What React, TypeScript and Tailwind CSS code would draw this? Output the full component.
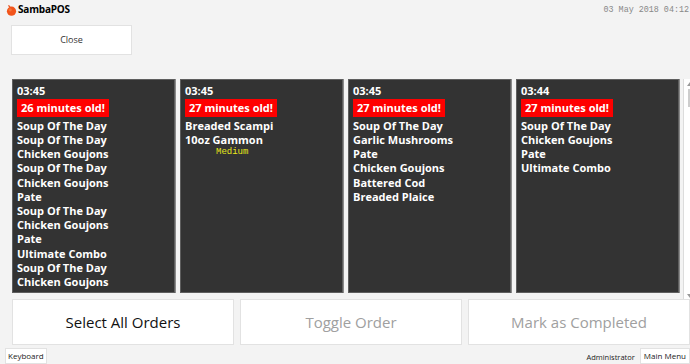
import React from "react";

type Ticket = {
  time: string;
  age: string;
  items: { name: string; note?: string }[];
};

const tickets: Ticket[] = [
  {
    time: "03:45",
    age: "26 minutes old!",
    items: [
      { name: "Soup Of The Day" },
      { name: "Soup Of The Day" },
      { name: "Chicken Goujons" },
      { name: "Soup Of The Day" },
      { name: "Chicken Goujons" },
      { name: "Pate" },
      { name: "Soup Of The Day" },
      { name: "Chicken Goujons" },
      { name: "Pate" },
      { name: "Ultimate Combo" },
      { name: "Soup Of The Day" },
      { name: "Chicken Goujons" },
    ],
  },
  {
    time: "03:45",
    age: "27 minutes old!",
    items: [{ name: "Breaded Scampi" }, { name: "10oz Gammon", note: "Medium" }],
  },
  {
    time: "03:45",
    age: "27 minutes old!",
    items: [
      { name: "Soup Of The Day" },
      { name: "Garlic Mushrooms" },
      { name: "Pate" },
      { name: "Chicken Goujons" },
      { name: "Battered Cod" },
      { name: "Breaded Plaice" },
    ],
  },
  {
    time: "03:44",
    age: "27 minutes old!",
    items: [
      { name: "Soup Of The Day" },
      { name: "Chicken Goujons" },
      { name: "Pate" },
      { name: "Ultimate Combo" },
    ],
  },
];

const Logo = () => (
  <svg width="12" height="12" viewBox="0 0 12 12">
    <path d="M3 1.5 C4 1 5 1.6 5.4 3 C4.2 3 3.3 2.5 3 1.5 Z" fill="#e8501c" />
    <circle cx="6.5" cy="7.2" r="4.6" fill="#f2541b" />
    <circle cx="5.2" cy="5.8" r="1.6" fill="#f78a4e" opacity="0.6" />
  </svg>
);

const TicketCard = ({ t }: { t: Ticket }) => (
  <div className="w-[163px] h-full shrink-0 bg-[#333333] border border-[#5e5e5e] shadow-[1px_0_0_#8a8a8a] overflow-hidden px-[4px] pt-[3px] text-white font-['Open_Sans',sans-serif] font-bold text-[11px]">
    <div className="leading-[16px]">{t.time}</div>
    <div className="inline-block bg-[#ff0000] px-[4px] h-[18px] leading-[18px]">{t.age}</div>
    <div className="mt-[2px] flex flex-col">
      {t.items.map((it, i) => (
        <div key={i}>
          <div className="leading-[14.2px]">{it.name}</div>
          {it.note && (
            <div className="pl-[31px] text-[9px] leading-[11px] font-normal text-[#e8e81a] font-['Liberation_Mono',monospace]">
              {it.note}
            </div>
          )}
        </div>
      ))}
    </div>
  </div>
);

export default function App() {
  return (
    <div className="w-[690px] h-[364px] overflow-hidden bg-[#f3f3f3] flex flex-col font-['Open_Sans',sans-serif]">
      <div className="h-[20px] flex items-center justify-between pl-[5px] pr-[1px]">
        <div className="flex items-center gap-[1px]">
          <Logo />
          <span className="text-[10px] font-bold text-black tracking-[-0.2px]">SambaPOS</span>
        </div>
        <span className="font-['Liberation_Mono',monospace] text-[8.4px] text-[#888] whitespace-nowrap">
          03 May 2018 04:12
        </span>
      </div>

      <div className="pl-[11px] mt-[5px]">
        <button className="w-[121px] h-[30px] bg-white border border-[#e2e2e2] text-[9px] text-[#333]">
          Close
        </button>
      </div>

      <div className="mt-[24px] pl-[12px] flex gap-[5px] h-[214px]">
        {tickets.map((t, i) => (
          <TicketCard key={i} t={t} />
        ))}
        <div className="ml-[-1px] w-[12px] shrink-0 h-[222px] bg-white border-l border-[#dcdcdc] flex flex-col items-center pt-[3px] pb-[3px]">
          <svg width="6" height="4" viewBox="0 0 6 4">
            <path d="M0 4 L3 0 L6 4 Z" fill="#999" />
          </svg>
          <div className="mt-[3px] ml-[4px] w-[8px] h-[18px] bg-[#cdcdcd]" />
          <div className="flex-1" />
          <svg width="6" height="4" viewBox="0 0 6 4">
            <path d="M0 0 L3 4 L6 0 Z" fill="#999" />
          </svg>
        </div>
      </div>

      <div className="mt-[6px] pl-[12px] flex gap-[6px] h-[47px]">
        <button className="w-[222px] shrink-0 bg-white border border-[#e2e2e2] text-[15px] text-[#111]">
          Select All Orders
        </button>
        <button className="w-[222px] shrink-0 bg-white border border-[#e2e2e2] text-[15px] text-[#a0a0a0]">
          Toggle Order
        </button>
        <button className="w-[222px] shrink-0 bg-white border border-[#e2e2e2] text-[15px] text-[#a0a0a0]">
          Mark as Completed
        </button>
      </div>

      <div className="mt-[3px] flex items-end justify-between pl-[5px] h-[16px]">
        <button className="h-[16px] px-[2px] bg-white border border-[#e2e2e2] text-[8px] text-[#222] leading-[14px]">
          Keyboard
        </button>
        <div className="flex items-end gap-[5px]">
          <span className="text-[7.5px] text-[#222] leading-[14px]">Administrator</span>
          <button className="h-[16px] px-[3px] bg-white border border-[#e2e2e2] text-[8px] text-[#222] leading-[14px]">
            Main Menu
          </button>
        </div>
      </div>
    </div>
  );
}
